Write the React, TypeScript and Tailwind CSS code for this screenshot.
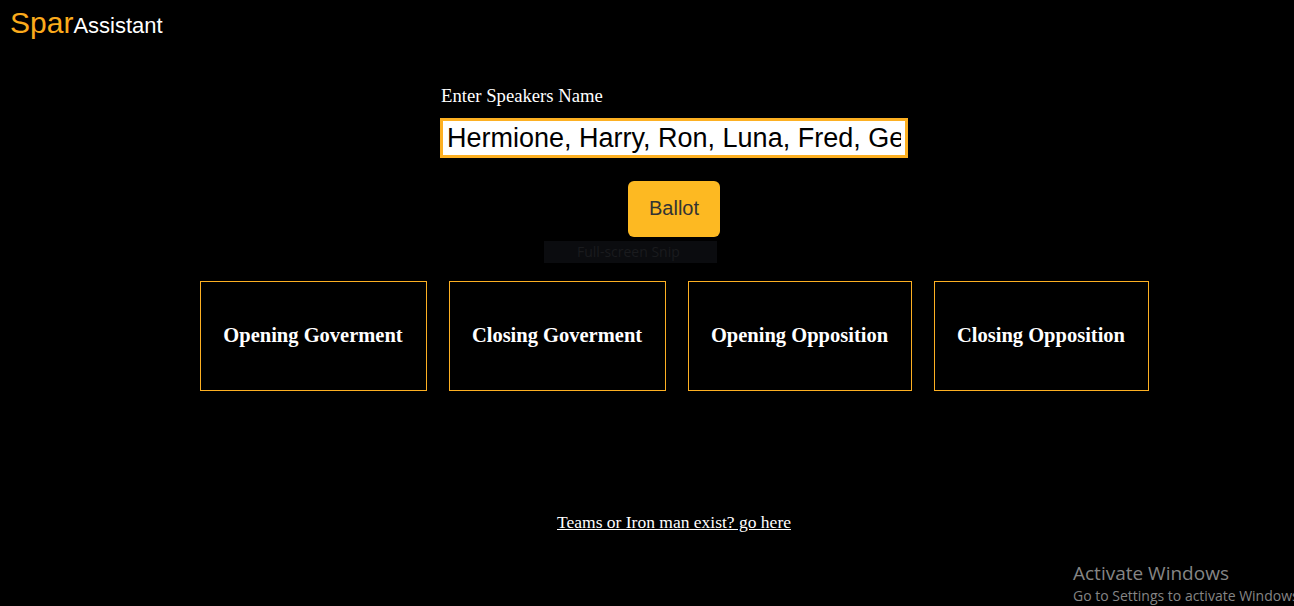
import React from 'react';

const teams = [
  { name: 'Opening Goverment', w: 'w-[227px]' },
  { name: 'Closing Goverment', w: 'w-[217px]' },
  { name: 'Opening Opposition', w: 'w-[224px]' },
  { name: 'Closing Opposition', w: 'w-[215px]' },
];

export default function App() {
  return (
    <div className="relative min-h-screen overflow-hidden bg-black text-white" style={{ fontFamily: '"Liberation Serif", serif' }}>
      {/* logo */}
      <header className="flex items-baseline pl-[10px] pt-[6px] h-[40px]" style={{ fontFamily: '"Liberation Sans", Arial, sans-serif' }}>
        <span className="text-[30px] leading-[34px] text-[#fbab1c]">Spar</span>
        <span className="text-[22px] leading-[34px] text-white">Assistant</span>
      </header>

      <main className="flex flex-col items-center pl-[54px]">
        <div className="w-[468px] mt-[45px]">
          <label className="block pl-px text-[18.7px] leading-[21px]">Enter Speakers Name</label>
        </div>
        <input
          type="text"
          defaultValue="Hermione, Harry, Ron, Luna, Fred, George, Ginny, Neville"
          className="mt-[12px] w-[468px] h-[40px] border-[3px] border-[#fdb022] bg-white px-[4px] text-[27px] text-black outline-none"
          style={{ fontFamily: '"Liberation Sans", Arial, sans-serif' }}
        />
        <button
          className="mt-[23px] h-[56px] w-[92px] rounded-[6px] bg-[#fdb922] pb-[2px] text-[20px] text-[#333333]"
          style={{ fontFamily: '"Liberation Sans", Arial, sans-serif' }}
        >
          Ballot
        </button>

        <div className="mt-[44px] flex gap-[22px]">
          {teams.map((t) => (
            <div
              key={t.name}
              className={`${t.w} h-[110px] flex items-center justify-center border border-[#fdb022] pb-[2px] text-[20.5px] font-bold whitespace-nowrap`}
            >
              {t.name}
            </div>
          ))}
        </div>

        <a href="#" className="mt-[121px] text-[17.5px] leading-[21px] text-white underline">
          Teams or Iron man exist? go here
        </a>
      </main>

      {/* snipping tool tooltip */}
      <div
        className="absolute left-[544px] top-[241px] w-[173px] h-[22px] bg-[#0b0c0f] text-[14px] leading-[22px] text-[#1a1b1e] pl-[33px]"
        style={{ fontFamily: '"Open Sans", sans-serif' }}
      >
        Full-screen Snip
      </div>

      {/* windows watermark */}
      <div
        className="absolute left-[1073px] top-[561px] whitespace-nowrap text-[#858585]"
        style={{ fontFamily: '"Open Sans", sans-serif' }}
      >
        <div className="text-[19px] leading-[25px]">Activate Windows</div>
        <div className="text-[14px] leading-[19px]">Go to Settings to activate Windows.</div>
      </div>
    </div>
  );
}
